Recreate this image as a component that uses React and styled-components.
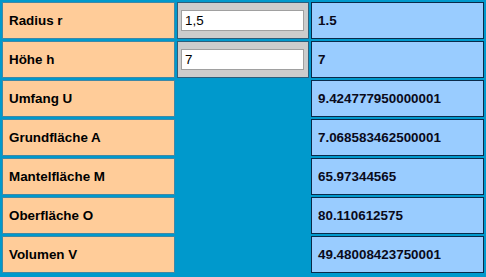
import React from "react";
import styled, { createGlobalStyle } from "styled-components";

const GlobalStyle = createGlobalStyle`
  html, body {
    margin: 0;
    padding: 0;
    background: #0099cc;
  }
`;

const rows = [
  { label: "Radius r", input: "1,5", value: "1.5" },
  { label: "Höhe h", input: "7", value: "7" },
  { label: "Umfang U", value: "9.424777950000001" },
  { label: "Grundfläche A", value: "7.068583462500001" },
  { label: "Mantelfläche M", value: "65.97344565" },
  { label: "Oberfläche O", value: "80.110612575" },
  { label: "Volumen V", value: "49.48008423750001" },
];

export default function App() {
  return (
    <>
      <GlobalStyle />
      <Grid>
        {rows.map((r) => (
          <React.Fragment key={r.label}>
            <Label>{r.label}</Label>
            {r.input !== undefined ? (
              <InputCell>
                <Field type="text" defaultValue={r.input} />
              </InputCell>
            ) : (
              <Empty />
            )}
            <Value>{r.value}</Value>
          </React.Fragment>
        ))}
      </Grid>
    </>
  );
}

const Grid = styled.div`
  display: grid;
  grid-template-columns: 173px 132px 173px;
  grid-auto-rows: 37px;
  gap: 2px;
  padding: 2px;
  background: #0099cc;
  font-family: "Liberation Sans", Arial, sans-serif;
  font-size: 13.4px;
`;

const Cell = styled.div`
  box-sizing: border-box;
  display: flex;
  align-items: center;
  padding: 0 6px;
  font-weight: bold;
  color: #000;
`;

const Label = styled(Cell)`
  background: #ffcc99;
  border: 1px solid #3f88a6;
`;

const Value = styled(Cell)`
  background: #99ccff;
  border: 1px solid #0a2a4a;
  color: #0a0a1a;
`;

const InputCell = styled(Cell)`
  background: #cccccc;
  border: 1px solid #2c5d7a;
  padding: 0 4px 0 3px;
`;

const Empty = styled.div``;

const Field = styled.input`
  box-sizing: border-box;
  width: 123px;
  height: 21px;
  border: 1px solid #a0a0a0;
  background: #fff;
  padding: 1px 3px;
  font-family: "Liberation Sans", Arial, sans-serif;
  font-size: 13.4px;
  color: #000;
  outline: none;
`;
